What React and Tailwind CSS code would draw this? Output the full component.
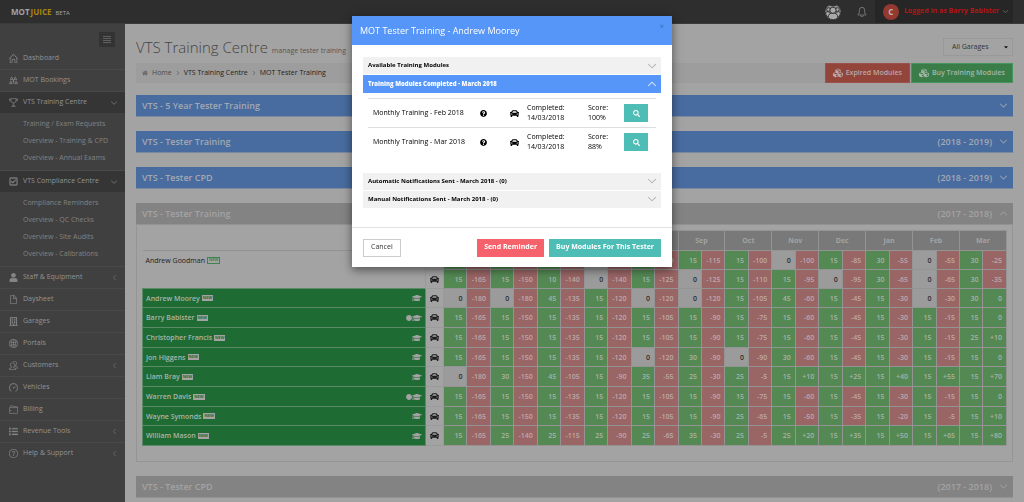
import { FaCar, FaCubes, FaGraduationCap, FaHome, FaList, FaQuestionCircle, FaRegBuilding, FaRegCheckSquare, FaSearch, FaUser, FaCaretDown, FaCircle } from "react-icons/fa";
import { SlArrowDown, SlArrowLeft, SlArrowRight, SlArrowUp, SlBell, SlDoc, SlGlobe, SlHome, SlPeople, SlQuestion, SlSpeedometer, SlTrophy, SlWallet } from "react-icons/sl";

const months = ["Apr", "May", "Jun", "Jul", "Aug", "Sep", "Oct", "Nov", "Dec", "Jan", "Feb", "Mar"];

// minutes of training that each tester needs for the year
const REQUIRED = 180;

const testers = [
  { name: "Andrew Goodman", passed: false, minutes: [15, 15, 10, 0, 10, 15, 15, 0, 15, 30, 0, 30] },
  { name: "", passed: false, minutes: [15, 15, 10, 0, 15, 0, 15, 15, 0, 30, 0, 30] },
  { name: "Andrew Moorey", passed: true, minutes: [0, 0, 45, 15, 0, 0, 15, 45, 15, 15, 0, 30] },
  { name: "Barry Babister", passed: true, badge: true, minutes: [15, 15, 15, 15, 15, 15, 15, 15, 15, 15, 15, 15] },
  { name: "Christopher Francis", passed: true, minutes: [15, 15, 15, 15, 15, 15, 15, 15, 15, 15, 15, 25] },
  { name: "Jon Higgens", passed: true, minutes: [15, 15, 15, 15, 0, 30, 0, 30, 15, 15, 15, 15] },
  { name: "Liam Bray", passed: true, minutes: [0, 30, 45, 15, 35, 25, 25, 15, 15, 15, 15, 15] },
  { name: "Warren Davis", passed: true, badge: true, minutes: [15, 15, 15, 15, 15, 15, 15, 15, 15, 15, 15, 15] },
  { name: "Wayne Symonds", passed: true, minutes: [15, 15, 15, 15, 15, 15, 25, 15, 15, 15, 15, 15] },
  { name: "William Mason", passed: true, minutes: [15, 25, 25, 25, 25, 35, 25, 25, 15, 15, 15, 15] },
];

const menu = [
  { label: "Dashboard", icon: SlHome },
  { label: "MOT Bookings", icon: TrianglesIcon },
  {
    label: "VTS Training Centre",
    icon: SlTrophy,
    items: ["Training / Exam Requests", "Overview - Training & CPD", "Overview - Annual Exams"],
  },
  {
    label: "VTS Compliance Centre",
    icon: FaRegCheckSquare,
    items: ["Compliance Reminders", "Overview - QC Checks", "Overview - Site Audits", "Overview - Calibrations"],
  },
  { label: "Staff & Equipment", icon: FaUser, more: true },
  { label: "Daysheet", icon: SlDoc },
  { label: "Garages", icon: FaRegBuilding },
  { label: "Portals", icon: SlGlobe },
  { label: "Customers", icon: SlPeople, more: true },
  { label: "Vehicles", icon: SlSpeedometer },
  { label: "Billing", icon: SlWallet },
  { label: "Revenue Tools", icon: FaList, more: true },
  { label: "Help & Support", icon: SlQuestion, more: true },
];

function TrianglesIcon({ className }) {
  return (
    <svg viewBox="0 0 20 20" fill="none" stroke="currentColor" strokeWidth="1.8" className={className}>
      <path d="M6 2 L3 8 H9 Z M14 2 L11 8 H17 Z M4 11 L1 17 H7 Z M16 11 L13 17 H19 Z M10 8 V17 M8 11 H12" />
    </svg>
  );
}

function BallLogo() {
  return (
    <svg className="size-4" viewBox="0 0 32 32" aria-hidden="true">
      <circle cx="16" cy="16" r="15.5" fill="#8f8f8f" />
      <g fill="#a9a9a9" stroke="#2e2e2e" strokeWidth="1.8">
        <path d="M9 2 Q16 6 23 2 Q16 -2 9 2 Z" fill="#2e2e2e" />
        <path d="M1 17 Q6 12 11 19 Q10 24 5 26 Q1 22 1 17 Z" />
        <path d="M31 17 Q26 12 21 19 Q22 24 27 26 Q31 22 31 17 Z" />
        <circle cx="7" cy="11" r="3.6" />
        <circle cx="25" cy="11" r="3.6" />
        <path d="M6 27 Q7 18 16 18 Q25 18 26 27 Q22 31.5 16 31.5 Q10 31.5 6 27 Z" />
        <circle cx="16" cy="12.5" r="6.2" />
      </g>
    </svg>
  );
}

function TopBar() {
  return (
    <header className="flex h-6 items-center justify-between border-b border-[#3a3a3a] bg-[#2e2e2e] px-[11px]">
      <a href="#" className="flex items-baseline text-[8px] font-bold text-[#a3a3a3]">
        MOT<span className="ml-px text-[#a8850f]">JUICE</span>
        <span className="ml-1 text-[6px] font-normal">BETA</span>
      </a>
      <div className="flex h-full items-center">
        <BallLogo />
        <button type="button" aria-label="Notifications" className="ml-4 mr-2 text-[#7d7d7d]">
          <SlBell className="size-[10px]" strokeWidth={20} />
        </button>
        <button type="button" className="flex h-full items-center bg-[#262626] pl-2 pr-[5px] text-[7px] font-bold text-[#b31414]">
          <span className="mr-[5px] flex size-4 items-center justify-center rounded-full bg-[#93392f] text-[8px] text-[#bdb4b3]">C</span>
          Logged in as Barry Babister
          <SlArrowDown className="ml-1 size-[5px] text-[#777]" strokeWidth={50} />
        </button>
      </div>
    </header>
  );
}

function Sidebar() {
  return (
    <nav className="w-[125px] shrink-0 bg-[#404040] pt-2 text-[7px] text-[#939393]">
      <div className="flex justify-end pr-[10px]">
        <button type="button" aria-label="Toggle menu" className="flex h-[15px] w-4 flex-col items-center justify-center gap-px bg-[#333]">
          <span className="h-px w-2 bg-[#606060]" />
          <span className="h-px w-2 bg-[#606060]" />
          <span className="h-px w-2 bg-[#606060]" />
          <span className="h-px w-2 bg-[#606060]" />
        </button>
      </div>
      <ul>
        {menu.map(({ label, icon: Icon, items, more }) => (
          <li key={label} className="border-t border-[#494949] first:border-transparent">
            <a href="#" className={items ? "flex h-[21px] items-center bg-[#353535] pl-[9px] pr-2" : "flex h-[21px] items-center pl-[9px] pr-2"}>
              <Icon className="mr-[5px] size-[9px] shrink-0 text-[#858585]" strokeWidth={15} />
              <span className="flex-1 whitespace-nowrap">{label}</span>
              {items && <SlArrowDown className="size-[6px] text-[#777]" strokeWidth={40} />}
              {more && <SlArrowLeft className="size-[5px] text-[#777]" strokeWidth={40} />}
            </a>
            {items && (
              <ul className="py-[3px] text-[#828282]">
                {items.map((item) => (
                  <li key={item}>
                    <a href="#" className="flex h-[17px] items-center whitespace-nowrap pl-[23px]">{item}</a>
                  </li>
                ))}
              </ul>
            )}
          </li>
        ))}
      </ul>
    </nav>
  );
}

function PanelBar({ title, years, open, grey }) {
  const Arrow = open ? SlArrowUp : SlArrowDown;

  return (
    <h2>
      <button
        type="button"
        aria-expanded={!!open}
        className={
          grey
            ? "flex h-[22px] w-full items-center border-b border-[#929292] bg-[#838383] px-[6px] text-[9px] font-semibold text-[#a3a3a3]"
            : "flex h-[22px] w-full items-center border-b border-[#7b899f] bg-[#486c9f] px-[6px] text-[9px] font-semibold text-[#a3a9b2]"
        }
      >
        <span className="flex-1 text-left">{title}</span>
        {years && <span>({years})</span>}
        <Arrow className="ml-2 size-[7px]" strokeWidth={60} />
      </button>
    </h2>
  );
}

function TesterRow({ tester }) {
  let balance = -REQUIRED;
  const cell = "border border-[#949494] pr-1 text-right font-semibold";

  return (
    <tr className={tester.passed ? "h-5 nth-[3n]:h-[19px]" : "h-[19px]"}>
      <th
        scope="row"
        className={
          tester.passed
            ? "border border-[#5c8a66] bg-[#1e6b33] px-[3px] font-semibold text-[#a9b5ab]"
            : tester.name
              ? "border-t border-[#929292] px-[3px] font-normal text-[#222]"
              : "px-[3px] font-normal"
        }
      >
        <div className="flex items-center">
          {tester.name}
          {tester.name && (
            <span
              className={
                tester.passed
                  ? "ml-[2px] flex h-[6px] items-center bg-[#a3a3a3] px-px text-[4px] font-bold text-[#1e6b33]"
                  : "ml-[2px] flex h-[7px] items-center border border-[#3f8450] px-px text-[4px] font-bold text-[#3f8450]"
              }
            >
              NEW
            </span>
          )}
          {tester.passed && (
            <span className="ml-auto flex items-center text-[#a3a3a3]">
              {tester.badge && <FaCircle className="size-[6px]" />}
              <FaGraduationCap className="size-[10px]" />
            </span>
          )}
        </div>
      </th>
      <td className="border border-[#9a9a9a]">
        <FaCar className="mx-auto size-[9px] text-[#1c1c1c]" />
      </td>
      {tester.minutes.map((value, i) => {
        balance += value;
        return [
          <td key={`${i}-minutes`} className={`${cell} ${value ? "bg-[#548954] text-[#a6b3a6]" : "bg-[#9b9b9b] text-[#2e2e2e]"}`}>
            {value}
          </td>,
          <td key={`${i}-balance`} className={`${cell} ${balance < 0 ? "bg-[#9a6565] text-[#bda9a9]" : "bg-[#548954] text-[#a6b3a6]"}`}>
            {balance > 0 ? `+${balance}` : balance}
          </td>,
        ];
      })}
    </tr>
  );
}

function TrainingTable() {
  return (
    <div className="border border-t-0 border-[#959595] px-[5px] pb-[15px] pt-[5px]">
      <table className="w-full table-fixed border-collapse text-left text-[7px] leading-none">
        <colgroup>
          <col className="w-[283px]" />
          <col className="w-[18px]" />
          {months.map((month) => [<col key={`${month}-a`} />, <col key={`${month}-b`} />])}
        </colgroup>
        <thead>
          <tr className="h-5">
            <td />
            <td />
            {months.map((month) => (
              <th key={month} colSpan={2} scope="colgroup" className="border border-[#949494] bg-[#797979] text-center font-bold text-[#a3a3a3]">
                {month}
              </th>
            ))}
          </tr>
        </thead>
        <tbody>
          {testers.map((tester, i) => (
            <TesterRow key={i} tester={tester} />
          ))}
        </tbody>
      </table>
    </div>
  );
}

function Content() {
  return (
    <main className="min-w-0 flex-1 bg-[#a3a3a3] px-[11px] text-[7px]">
      <div className="flex h-[38px] items-center justify-between pt-2">
        <h1 className="text-[15px] font-light text-[#444]">
          VTS Training Centre <small className="text-[7px] font-normal text-[#555]">manage tester training</small>
        </h1>
        <label className="relative flex items-center">
          <span className="sr-only">Garage</span>
          <select className="w-[70px] appearance-none border border-[#999] py-[3px] pl-2 text-[7px] leading-[10px] text-[#333]">
            <option>All Garages</option>
          </select>
          <FaCaretDown className="pointer-events-none absolute right-1 size-[6px] text-[#111]" />
        </label>
      </div>
      <div className="mt-px flex h-5 items-center bg-[#9d9d9d] pl-[6px]">
        <ol className="flex flex-1 items-center gap-1 text-[#222]">
          <li className="flex items-center gap-1 text-[#4b4b4b]">
            <FaHome className="size-[6px] text-[#666]" />
            <a href="#">Home</a>
          </li>
          <SlArrowRight className="size-1 text-[#555]" strokeWidth={40} />
          <li><a href="#">VTS Training Centre</a></li>
          <SlArrowRight className="size-1 text-[#555]" strokeWidth={40} />
          <li>MOT Tester Training</li>
        </ol>
        <button type="button" className="mr-px flex h-5 items-center gap-[3px] border border-[#9c5148] bg-[#93453b] px-[7px] font-semibold text-[#b9a9a7]">
          <FaCubes className="size-[10px]" /> Expired Modules
        </button>
        <button type="button" className="flex h-5 items-center gap-[3px] border border-[#45965a] bg-[#3a7d49] px-[7px] font-semibold text-[#a6b6a9]">
          <FaCubes className="size-[10px]" /> Buy Training Modules
        </button>
      </div>
      <div className="mt-3 flex flex-col gap-[14px]">
        <PanelBar title="VTS - 5 Year Tester Training" />
        <PanelBar title="VTS - Tester Training" years="2018 - 2019" />
        <PanelBar title="VTS - Tester CPD" years="2018 - 2019" />
        <section>
          <PanelBar title="VTS - Tester Training" years="2017 - 2018" open grey />
          <TrainingTable />
        </section>
        <PanelBar title="VTS - Tester CPD" years="2017 - 2018" grey />
      </div>
    </main>
  );
}

const modules = [
  { name: "Monthly Training - Feb 2018", date: "14/03/2018", score: "100%" },
  { name: "Monthly Training - Mar 2018", date: "14/03/2018", score: "88%" },
];

function AccordionBar({ title, open }) {
  return (
    <button
      type="button"
      aria-expanded={!!open}
      className={
        open
          ? "flex h-[18px] w-full items-center justify-between bg-[#5596f8] px-[5px] text-[6px] font-extrabold text-white"
          : "flex h-[18px] w-full items-center justify-between border-b border-white bg-[#f1f1f1] px-[5px] text-[6px] font-bold text-black"
      }
    >
      {title}
      {open ? <SlArrowUp className="size-2" strokeWidth={40} /> : <SlArrowDown className="size-2 text-[#aaa]" strokeWidth={40} />}
    </button>
  );
}

function TrainingModal() {
  return (
    <div className="fixed inset-0 flex items-start justify-center pt-4">
      <div role="dialog" aria-labelledby="modal-title" className="w-full max-w-[320px] bg-white text-[7px] text-black shadow-[0_3px_9px_rgba(0,0,0,0.5)]">
        <div className="flex h-[29px] justify-between bg-[#5596f8] px-2">
          <h3 id="modal-title" className="self-center text-[9px] text-white">MOT Tester Training - Andrew Moorey</h3>
          <button type="button" aria-label="Close" className="self-start pt-1 text-[8px] text-[#3a68ad]">×</button>
        </div>
        <div className="px-[11px] pb-[18px] pt-3">
          <AccordionBar title="Available Training Modules" />
          <AccordionBar title="Training Modules Completed - March 2018" open />
          <div className="px-[5px] pb-4 pt-[5px]">
            <table className="w-full table-fixed">
              <colgroup>
                <col className="w-[112px]" />
                <col className="w-[30px]" />
                <col className="w-[17px]" />
                <col className="w-[61px]" />
                <col />
                <col className="w-8" />
              </colgroup>
              <tbody>
                {modules.map((module) => (
                  <tr key={module.name} className="h-[29px] border-t border-[#ddd] leading-[10px]">
                    <td className="pl-[5px]">{module.name}</td>
                    <td><FaQuestionCircle className="size-[7px]" /></td>
                    <td><FaCar className="size-[9px]" /></td>
                    <td>Completed:<br />{module.date}</td>
                    <td>Score:<br />{module.score}</td>
                    <td className="pr-2">
                      <button type="button" aria-label="View result" className="flex h-[18px] w-6 items-center justify-center bg-[#4dbdb5] text-white">
                        <FaSearch className="size-[7px]" />
                      </button>
                    </td>
                  </tr>
                ))}
              </tbody>
            </table>
          </div>
          <AccordionBar title="Automatic Notifications Sent - March 2018 - (0)" />
          <AccordionBar title="Manual Notifications Sent - March 2018 - (0)" />
        </div>
        <div className="flex gap-[5px] border-t border-[#e2e2e2] px-[11px] pb-[10px] pt-[11px]">
          <button type="button" className="mr-auto h-[18px] border border-[#ccc] px-[7px] text-[#333]">Cancel</button>
          <button type="button" className="h-[18px] bg-[#f5626b] px-[7px] font-bold text-white">Send Reminder</button>
          <button type="button" className="h-[18px] bg-[#4dbdb5] px-[7px] font-bold text-white">Buy Modules For This Tester</button>
        </div>
      </div>
    </div>
  );
}

export default function App() {
  return (
    <div className="flex h-screen flex-col overflow-hidden font-['Open_Sans',sans-serif]">
      <TopBar />
      <div className="flex flex-1">
        <Sidebar />
        <Content />
      </div>
      <TrainingModal />
    </div>
  );
}
